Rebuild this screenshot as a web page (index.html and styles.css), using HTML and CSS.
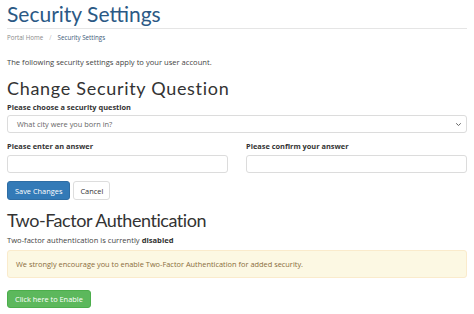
FILE: index.html
```html
<!DOCTYPE html>
<html>
<head>
<meta charset="utf-8">
<link rel="stylesheet" href="styles.css">
</head>
<body>
<div class="page">
  <h1 class="title">Security Settings</h1>
  <div class="crumbs"><span class="home">Portal Home</span><span class="sep">/</span><span class="cur">Security Settings</span></div>
  <p class="intro">The following security settings apply to your user account.</p>

  <h2 class="section section-question">Change Security Question</h2>
  <label class="lbl">Please choose a security question</label>
  <div class="select">
    <span>What city were you born in?</span>
    <svg class="chev" width="7" height="5" viewBox="0 0 7 5"><path d="M1.2 1.3 L3.5 3.5 L5.8 1.3" fill="none" stroke="#666" stroke-width="1"/></svg>
  </div>
  <div class="row">
    <div class="col">
      <label class="lbl">Please enter an answer</label>
      <div class="input"></div>
    </div>
    <div class="col">
      <label class="lbl">Please confirm your answer</label>
      <div class="input"></div>
    </div>
  </div>
  <div class="btns">
    <button class="btn primary">Save Changes</button>
    <button class="btn default">Cancel</button>
  </div>

  <h2 class="section section-twofa">Two-Factor Authentication</h2>
  <p class="status">Two-factor authentication is currently <b>disabled</b></p>
  <div class="alert">We strongly encourage you to enable Two-Factor Authentication for added security.</div>
  <button class="btn success">Click here to Enable</button>
</div>
</body>
</html>
```
FILE: styles.css
```css
* { box-sizing: border-box; }
html, body { margin: 0; padding: 0; background: #fff; }
body { font-family: "Open Sans", sans-serif; color: #333; }
.page { padding: 0 7px; display: flex; flex-direction: column; align-items: stretch; }
.title {
  font-family: "Lato", sans-serif; font-weight: 400; font-size: 21px;
  color: #2b5985; margin: 0; padding-top: 2px; line-height: 24px;
  border-bottom: 1px solid #e5e5e5; padding-bottom: 2px;
}
.crumbs { font-size: 6.2px; color: #8a8a8a; margin-top: 4px; line-height: 10px; }
.crumbs .sep { margin: 0 6px; color: #bbb; }
.crumbs .cur { color: #3e5a78; }
.intro { font-size: 7.6px; margin: 14px 0 0; line-height: 11px; color: #444; }
.section {
  font-family: "Lato", sans-serif; font-weight: 400; font-size: 18px;
  color: #333; margin: 9px 0 0; line-height: 22px;
}
.section-question { letter-spacing: 0.7px; }
.section-twofa { letter-spacing: -0.45px; }
.lbl { display: block; font-size: 7.4px; font-weight: 700; color: #333; line-height: 10px; margin-top: 3px; }
.select {
  margin-top: 3px; height: 18px; border: 1px solid #dcdcdc; border-radius: 3px;
  display: flex; align-items: center; justify-content: space-between;
  padding: 0 4px 0 9px; font-size: 7.4px; color: #666;
}
.chev { margin-top: 1px; }
.row { display: flex; gap: 18px; margin-top: 8px; }
.col { flex: 1; }
.col .lbl { margin-top: 0; }
.input { margin-top: 4px; height: 18px; border: 1px solid #dcdcdc; border-radius: 3px; }
.btns { display: flex; gap: 3px; margin-top: 8px; }
.btn {
  font-family: "Open Sans", sans-serif; font-size: 7.4px; height: 19px;
  border-radius: 3px; padding: 0 7px; border: 1px solid transparent; cursor: pointer;
}
.primary { background: #337ab7; border-color: #2e6da4; color: #fff; }
.default { background: #fff; border-color: #ddd; color: #333; padding: 0 6px; }
.status { font-size: 7.6px; margin: 4px 0 0; line-height: 11px; color: #444; }
.status b { color: #333; }
.alert {
  margin-top: 4px; height: 28px; background: #fcf8e3; border: 1px solid #faebcc;
  border-radius: 3px; color: #8a6d3b; font-size: 7.4px; display: flex; align-items: center;
  padding: 0 8px;
}
.success { align-self: flex-start; margin-top: 12px; background: #5cb85c; border-color: #4cae4c; color: #fff; height: 18px; padding: 0 7px; }
```
